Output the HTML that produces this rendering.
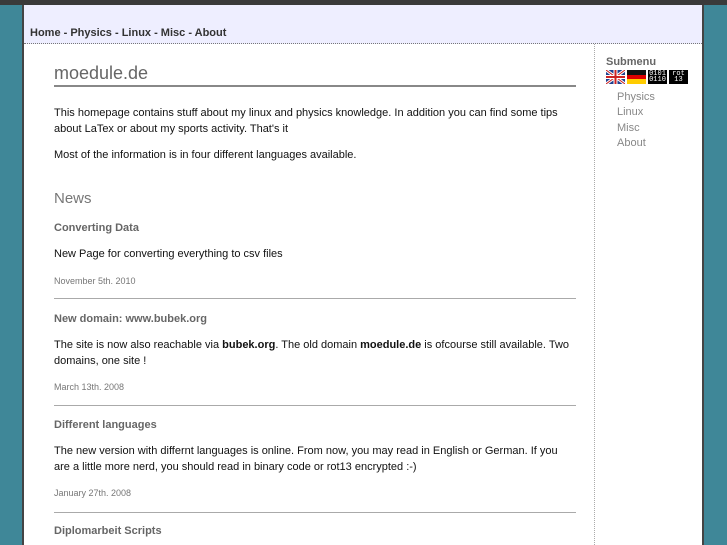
<!DOCTYPE html>
<html><head><meta charset="utf-8"><style>
body{margin:0;width:727px;height:545px;overflow:hidden;background:#3f8798;font-family:"Liberation Sans",sans-serif;position:relative}
.a{position:absolute;white-space:nowrap;line-height:1;margin-top:1px}
#wrap{position:absolute;left:22px;top:0;width:682px;height:545px;background:#fff;border-left:2px solid #444;border-right:2px solid #444;box-sizing:border-box}
#top{position:absolute;left:0;top:0;width:727px;height:5px;background:#3a3a3a}
#hdr{position:absolute;left:24px;top:5px;width:678px;height:38px;background:#eeeeff;border-bottom:1px dotted #777}
.nav{font-size:11px;font-weight:bold;color:#333}
.t{font-size:11px;color:#111}
.h{font-size:11px;font-weight:bold;color:#666}
.d{font-size:9px;color:#777}
.hr{position:absolute;left:54px;width:522px;height:1px;background:#aaa}
.s{font-size:11px;color:#888}
.f{position:absolute;top:70px;width:19px;height:14px}
</style></head><body>
<div id="wrap"></div>
<div id="top"></div>
<div id="hdr"></div>
<div class="a nav" style="left:30px;top:27px">Home - Physics - Linux - Misc - About</div>
<div style="position:absolute;left:594px;top:44px;height:501px;border-left:1px dotted #aaa"></div>
<div class="a" style="left:54px;top:63px;font-size:18px;color:#666">moedule.de</div>
<div style="position:absolute;left:54px;top:85px;width:522px;height:2px;background:#888"></div>
<div class="a t" style="left:54px;top:107px">This homepage contains stuff about my linux and physics knowledge. In addition you can find some tips</div>
<div class="a t" style="left:54px;top:123px">about LaTex or about my sports activity. That's it</div>
<div class="a t" style="left:54px;top:149px">Most of the information is in four different languages available.</div>
<div class="a" style="left:54px;top:190px;font-size:15px;color:#777">News</div>
<div class="a h" style="left:54px;top:222px">Converting Data</div>
<div class="a t" style="left:54px;top:248px">New Page for converting everything to csv files</div>
<div class="a d" style="left:54px;top:276px">November 5th. 2010</div>
<div class="hr" style="top:298px"></div>
<div class="a h" style="left:54px;top:313px">New domain: www.bubek.org</div>
<div class="a t" style="left:54px;top:339px">The site is now also reachable via <b>bubek.org</b>. The old domain <b>moedule.de</b> is ofcourse still available. Two</div>
<div class="a t" style="left:54px;top:355px">domains, one site !</div>
<div class="a d" style="left:54px;top:382px">March 13th. 2008</div>
<div class="hr" style="top:405px"></div>
<div class="a h" style="left:54px;top:419px">Different languages</div>
<div class="a t" style="left:54px;top:445px">The new version with differnt languages is online. From now, you may read in English or German. If you</div>
<div class="a t" style="left:54px;top:461px">are a little more nerd, you should read in binary code or rot13 encrypted :-)</div>
<div class="a d" style="left:54px;top:488px">January 27th. 2008</div>
<div class="hr" style="top:512px"></div>
<div class="a h" style="left:54px;top:525px">Diplomarbeit Scripts</div>
<div class="a h" style="left:606px;top:56px">Submenu</div>
<svg class="f" style="left:606px" viewBox="0 0 19 14"><rect width="19" height="14" fill="#1f3f8f"/><path d="M0 0L19 14M19 0L0 14" stroke="#fff" stroke-width="3"/><path d="M0 0L19 14M19 0L0 14" stroke="#c22" stroke-width="1"/><path d="M9.5 0V14M0 7H19" stroke="#fff" stroke-width="4"/><path d="M9.5 0V14M0 7H19" stroke="#c22" stroke-width="2"/></svg>
<svg class="f" style="left:627px" viewBox="0 0 19 14"><rect width="19" height="5" fill="#111"/><rect y="5" width="19" height="4" fill="#d00"/><rect y="9" width="19" height="5" fill="#fc0"/></svg>
<div class="f" style="left:648px;background:#000;color:#fff;font:7px 'Liberation Mono',monospace;line-height:6px;text-align:center;padding-top:1px;box-sizing:border-box">0101<br>0110</div>
<div class="f" style="left:669px;background:#000;color:#fff;font:7px 'Liberation Mono',monospace;line-height:6px;text-align:center;padding-top:1px;box-sizing:border-box">rot<br>13</div>
<div class="a s" style="left:617px;top:91px">Physics</div>
<div class="a s" style="left:617px;top:106px">Linux</div>
<div class="a s" style="left:617px;top:122px">Misc</div>
<div class="a s" style="left:617px;top:137px">About</div>
</body></html>
